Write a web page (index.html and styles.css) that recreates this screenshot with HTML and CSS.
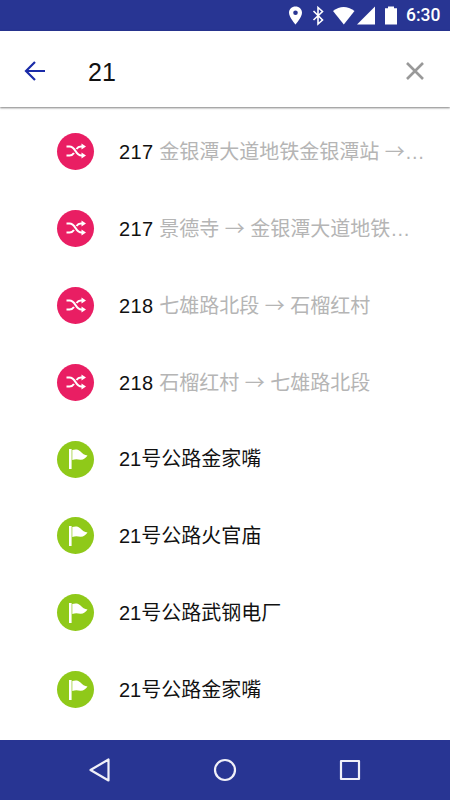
FILE: index.html
```
<!DOCTYPE html>
<html lang="zh-CN">
<head>
  <meta charset="UTF-8">
  <meta name="viewport" content="width=device-width, initial-scale=1.0">
  <title>21</title>
  <link rel="stylesheet" href="styles.css">
</head>
<body>
  <!-- shared icons -->
  <svg class="sprite">
    <symbol id="shuffle" viewBox="0 0 22 16">
      <path d="M1.500 3.500H4.500C11 3.500 10 12.500 16.500 12.500H17M1.500 12.500H4.500C7 12.500 8.200 11.200 9 10M11.500 6C12.500 4.500 13.800 3.500 16 3.500H17" fill="none" stroke="#fff" stroke-width="2.1"/>
      <path d="M16.500 .6L21 3.500L16.500 6.400ZM16.500 9.600L21 12.500L16.500 15.400Z" fill="#fff"/>
    </symbol>
    <symbol id="flag" viewBox="0 0 20 22">
      <path d="M1 1H3.600V21H1Z" fill="#fff"/>
      <path d="M4.300 2C7.500 1 10.500 1.300 12.500 3.500C14.500 6 16.500 7 19.500 7.500C17.500 10 15.500 12 12.500 11.800C9.500 11.300 7.500 11 4.300 12Z" fill="#fff"/>
    </symbol>
  </svg>

  <div class="status-bar">
    <svg class="status-icons" width="122" height="31" viewBox="0 0 122 31" fill="#fff">
      <path fill-rule="evenodd" d="M7.500 6.500C3.800 6.500 1 9.200 1 12.700C1 17.200 7.500 24.500 7.500 24.500S14 17.200 14 12.700C14 9.200 11.200 6.500 7.500 6.500ZM7.500 10.400A2.300 2.300 0 1 1 7.500 15A2.300 2.300 0 1 1 7.500 10.400Z"/>
      <path d="M25.500 11L34.500 20L30 24V7.500L34.500 11.500L25.500 20" fill="none" stroke="#fff" stroke-width="1.6"/>
      <path d="M45 11Q55.500 3 66.500 11L55.800 24.500Z"/>
      <path d="M87 6.500V24.500H69Z"/>
      <path d="M97 8.200H100V6.500H106V8.200H109V24.500H97Z"/>
    </svg>
    <span class="clock">6:30</span>
  </div>

  <div class="search-bar">
    <svg class="back" width="22" height="20" viewBox="0 0 22 20">
      <path d="M21 10H2M11 1L2 10L11 19" fill="none" stroke="#1a2ba8" stroke-width="2.2"/>
    </svg>
    <span class="query">21</span>
    <svg class="clear" width="18" height="18" viewBox="0 0 18 18">
      <path d="M1 1L17 17M17 1L1 17" fill="none" stroke="#999" stroke-width="2.6"/>
    </svg>
  </div>

  <div class="results">
    <div class="row">
      <span class="badge line"><svg class="shuffle"><use href="#shuffle"/></svg></span>
      <div class="title"><span class="number">217</span> <span class="route">金银潭大道地铁金银潭站 <span class="arrow">→</span>…</span></div>
    </div>
    <div class="row">
      <span class="badge line"><svg class="shuffle"><use href="#shuffle"/></svg></span>
      <div class="title"><span class="number">217</span> <span class="route">景德寺 <span class="arrow">→</span> 金银潭大道地铁…</span></div>
    </div>
    <div class="row">
      <span class="badge line"><svg class="shuffle"><use href="#shuffle"/></svg></span>
      <div class="title"><span class="number">218</span> <span class="route">七雄路北段 <span class="arrow">→</span> 石榴红村</span></div>
    </div>
    <div class="row">
      <span class="badge line"><svg class="shuffle"><use href="#shuffle"/></svg></span>
      <div class="title"><span class="number">218</span> <span class="route">石榴红村 <span class="arrow">→</span> 七雄路北段</span></div>
    </div>
    <div class="row">
      <span class="badge stop"><svg class="flag"><use href="#flag"/></svg></span>
      <div class="title">21号公路金家嘴</div>
    </div>
    <div class="row">
      <span class="badge stop"><svg class="flag"><use href="#flag"/></svg></span>
      <div class="title">21号公路火官庙</div>
    </div>
    <div class="row">
      <span class="badge stop"><svg class="flag"><use href="#flag"/></svg></span>
      <div class="title">21号公路武钢电厂</div>
    </div>
    <div class="row">
      <span class="badge stop"><svg class="flag"><use href="#flag"/></svg></span>
      <div class="title">21号公路金家嘴</div>
    </div>
  </div>

  <div class="nav-bar">
    <svg width="24" height="26" viewBox="0 0 24 26"><path d="M20.500 2.500V23.500L2.500 13Z"/></svg>
    <svg width="24" height="26" viewBox="0 0 24 26"><circle cx="12" cy="13" r="10"/></svg>
    <svg width="24" height="26" viewBox="0 0 24 26"><path d="M3 4H21V22H3Z"/></svg>
  </div>
</body>
</html>
```

FILE: styles.css
```
* {
  box-sizing: border-box;
}

body {
  margin: 0;
  height: 800px;
  display: flex;
  flex-direction: column;
  overflow: hidden;
  background-color: #fff;
  font-family: "Liberation Sans", "Noto Sans CJK SC", sans-serif;
  color: #111;
}

svg {
  display: block;
  flex: none;
}

.sprite {
  position: absolute;
  width: 0;
  height: 0;
}

.status-bar {
  height: 31px;
  flex: none;
  display: flex;
  align-items: center;
  justify-content: flex-end;
  padding-right: 9px;
  background-color: #283593;
}

.clock {
  width: 35px;
  margin-left: -4px;
  font: 500 17.5px/31px Roboto, sans-serif;
  color: #fff;
}

.search-bar {
  height: 76px;
  flex: none;
  display: flex;
  align-items: center;
  padding: 4px 26px 0 24px;
  box-shadow: 0 1px 2px rgba(0, 0, 0, 0.5);
}

.query {
  flex: 1;
  margin-left: 42px;
  padding-top: 2px;
  font-size: 25px;
}

.results {
  flex: 1;
  padding-top: 6px;
}

.row {
  height: 76.9px;
  display: flex;
  align-items: center;
  padding-left: 57px;
}

.badge {
  width: 37px;
  height: 37px;
  margin-right: 25px;
  flex: none;
  display: flex;
  align-items: center;
  justify-content: center;
  border-radius: 50%;
}

.line {
  background-color: #e91e63;
}

.stop {
  background-color: #8fc919;
}

.shuffle {
  width: 22px;
  height: 16px;
}

.flag {
  width: 20px;
  height: 22px;
  margin-left: 5px;
}

.title {
  font-size: 20px;
  line-height: 30px;
  white-space: nowrap;
}

.number {
  letter-spacing: 0.4px;
}

.route {
  color: #b5b5b5;
}

.arrow {
  font-family: "Noto Sans CJK SC", sans-serif;
}

.nav-bar {
  height: 60px;
  flex: none;
  display: flex;
  align-items: center;
  justify-content: space-between;
  padding: 0 88px;
  background-color: #283593;
}

.nav-bar svg {
  fill: none;
  stroke: #f0f0f8;
  stroke-width: 2.2;
  stroke-linejoin: round;
}
```
